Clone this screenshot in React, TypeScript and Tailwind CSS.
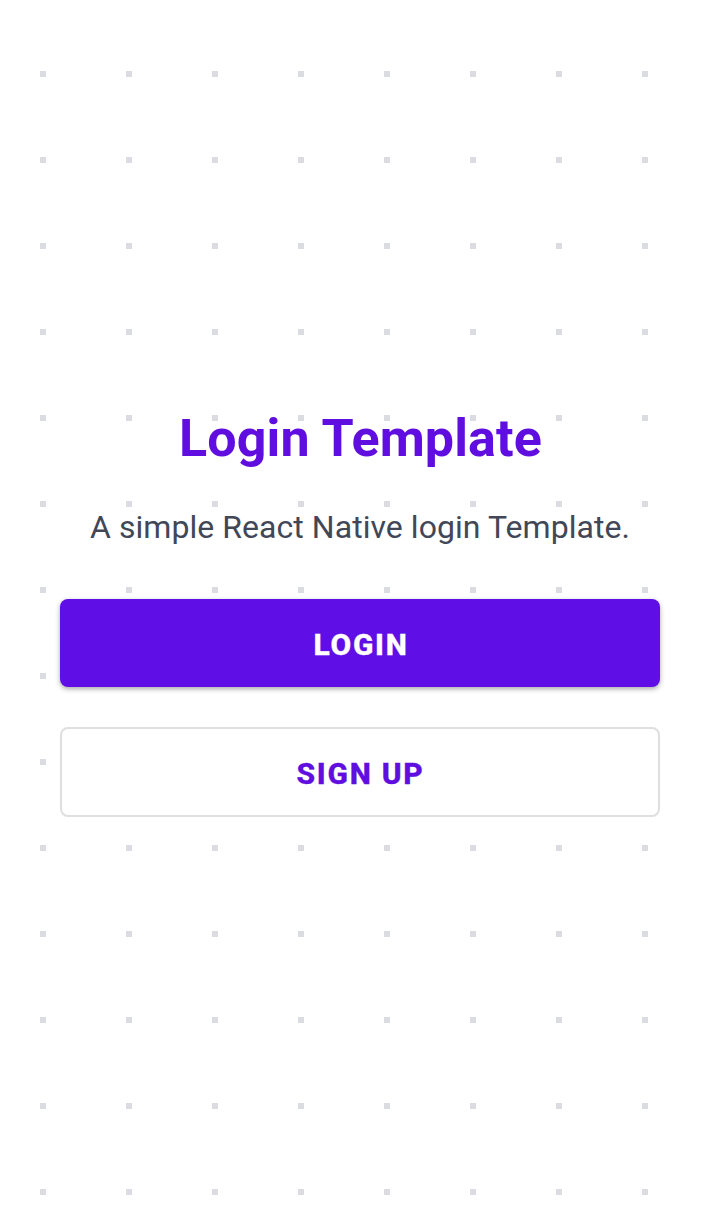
export default function App() {
  return (
    <main className="flex h-[1225px] w-full flex-col items-center overflow-hidden bg-white bg-[conic-gradient(from_270deg_at_6px_6px,#dbdbe2_25%,transparent_0)] bg-[length:86px_86px] bg-[position:40px_71px] font-['Roboto',sans-serif]">
      <h1 className="mt-[409px] pl-[1px] text-[52px] leading-[60px] font-bold tracking-[0.12px] text-[#600ee0]">Login Template</h1>
      <p className="mt-[37px] text-[32px] leading-[42px] tracking-[0.05px] text-[#414757]">A simple React Native login Template.</p>
      <button className="mt-[51px] h-[88px] w-[600px] rounded-[8px] bg-[#600ee6] pt-[2px] pl-[2px] text-[30px] font-extrabold tracking-[1.75px] text-white shadow-[0_2px_5px_rgba(0,0,0,0.34)] [-webkit-text-stroke:0.3px]">LOGIN</button>
      <button className="mt-[40px] h-[90px] w-[600px] rounded-[8px] border-2 border-[#dfdfe1] bg-white pt-[2px] pl-[1px] text-[30px] font-extrabold tracking-[1.75px] text-[#600ee0] [-webkit-text-stroke:0.3px]">SIGN UP</button>
    </main>
  );
}
